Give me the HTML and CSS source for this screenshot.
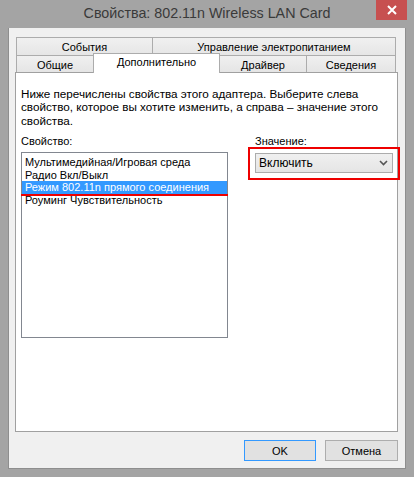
FILE: index.html
```html
<!DOCTYPE html>
<html lang="ru">
<head>
<meta charset="utf-8">
<title>Свойства: 802.11n Wireless LAN Card</title>
<link rel="stylesheet" href="styles.css">
</head>
<body>
<div class="window">
  <div class="titlebar">
    <span class="title">Свойства: 802.11n Wireless LAN Card</span>
    <div class="close" aria-label="Закрыть">
      <svg width="10" height="10" viewBox="0 0 10 10"><path d="M1 1 L9 9 M9 1 L1 9" stroke="#fff" stroke-width="2" fill="none"/></svg>
    </div>
  </div>
  <div class="client">
    <div class="tabs">
      <div class="tabrow">
        <div class="tab w-events">События</div>
        <div class="tab w-power">Управление электропитанием</div>
      </div>
      <div class="tabrow">
        <div class="tab w-general">Общие</div>
        <div class="tab w-adv selected">Дополнительно</div>
        <div class="tab w-driver">Драйвер</div>
        <div class="tab w-info">Сведения</div>
      </div>
    </div>
    <div class="panel">
      <p class="desc">Ниже перечислены свойства этого адаптера. Выберите слева<br>свойство, которое вы хотите изменить, а справа – значение этого<br>свойства.</p>
      <div class="cols">
        <div class="col-left">
          <div class="label">Свойство:</div>
          <div class="listbox">
            <div class="item">Мультимедийная/Игровая среда</div>
            <div class="item">Радио Вкл/Выкл</div>
            <div class="item selected">Режим 802.11n прямого соединения</div>
            <div class="item">Роуминг Чувствительность</div>
          </div>
        </div>
        <div class="col-right">
          <div class="label">Значение:</div>
          <div class="select-wrap">
            <div class="select">
              <span>Включить</span>
              <svg width="9" height="6" viewBox="0 0 9 6"><path d="M1 1 L4.5 4.5 L8 1" stroke="#555" stroke-width="1.6" fill="none"/></svg>
            </div>
            <div class="mark"></div>
          </div>
        </div>
      </div>
    </div>
    <div class="buttons">
      <div class="btn default w-ok">OK</div>
      <div class="btn w-cancel">Отмена</div>
    </div>
  </div>
</div>
</body>
</html>
```
FILE: styles.css
```css
* { box-sizing: border-box; }
html, body { margin: 0; padding: 0; }
body {
  background: #a4a4a4;
  font-family: "Segoe UI", "Liberation Sans", Arial, sans-serif;
  font-size: 11px;
  color: #000;
}
.window {
  width: 414px;
  height: 477px;
  background: #a4a4a4;
}
.titlebar {
  height: 28px;
  position: relative;
  display: flex;
  align-items: center;
  justify-content: center;
  padding-bottom: 2px;
}
.title {
  font-size: 14.3px;
  color: #3a3a3a;
}
.close {
  position: absolute;
  top: 0;
  right: 7px;
  width: 31px;
  height: 20px;
  background: #c75050;
  display: flex;
  align-items: center;
  justify-content: center;
}
.client {
  margin: 0 8px;
  height: 441px;
  background: #f0f0f0;
  border-left: 1px solid #8e8e8e;
  border-right: 1px solid #8e8e8e;
  border-bottom: 1px solid #8e8e8e;
  padding: 9px 7px 0 6px;
}
.tabs {
  margin-left: 1px;
}
.tabrow {
  display: flex;
}
.tab {
  margin-left: -1px;
  border: 1px solid #acacac;
  border-bottom: none;
  background: linear-gradient(#f0f0f0, #e5e5e5);
  display: flex;
  align-items: center;
  justify-content: center;
  color: #000;
  white-space: nowrap;
}
.tab:first-child { margin-left: 0; }
.tabrow:first-child .tab { height: 19px; padding-bottom: 1px; }
.tabrow:last-child .tab { height: 17px; margin-top: -1px; padding-top: 1px; }
.tabrow:last-child .tab.selected {
  position: relative;
  z-index: 1;
  height: 20px;
  margin-top: -3px;
  margin-bottom: -1px;
  background: #fff;
  padding-top: 0;
  padding-bottom: 4px;
}
.w-events { width: 137px; }
.w-power { width: 244px; }
.w-general { width: 78px; }
.w-adv { width: 127px; }
.w-driver { width: 88px; }
.w-info { width: 90px; }
.panel {
  width: 383px;
  height: 360px;
  background: #fff;
  border: 1px solid #a0a0a0;
  padding: 14px 5px 0 5px;
}
.desc {
  margin: 0;
  font-size: 11.7px;
  line-height: 13.4px;
  white-space: nowrap;
}
.cols {
  display: flex;
  gap: 27px;
  margin-top: 8px;
}
.col-left { width: 207px; }
.col-right { width: 138px; }
.label {
  line-height: 13px;
  margin-bottom: 4px;
}
.col-right .label { margin-bottom: 5px; }
.listbox {
  width: 207px;
  height: 186px;
  border: 1px solid #828790;
  background: #fff;
  padding-top: 3px;
}
.item {
  position: relative;
  height: 12.5px;
  line-height: 12.5px;
  padding-left: 3px;
  white-space: nowrap;
}
.item.selected {
  background: #3399ff;
  color: #fff;
}
.item.selected::after {
  content: "";
  position: absolute;
  left: -1px;
  right: -1px;
  top: 100%;
  height: 2px;
  background: #ee0000;
}
.select-wrap {
  position: relative;
  width: 138px;
}
.select {
  height: 20px;
  border: 1px solid #acacac;
  background: linear-gradient(#f0f0f0, #e5e5e5);
  display: flex;
  align-items: center;
  justify-content: space-between;
  padding: 0 4px 0 3px;
  font-size: 12px;
}
.mark {
  position: absolute;
  top: -6px;
  left: -7px;
  right: -7px;
  bottom: -7px;
  border: 2px solid #ee0000;
}
.buttons {
  display: flex;
  justify-content: flex-end;
  gap: 9px;
  margin-top: 8px;
}
.btn {
  height: 21px;
  border: 1px solid #adadad;
  background: #e1e1e1;
  display: flex;
  align-items: center;
  justify-content: center;
}
.btn.default { border-color: #3399ff; }
.w-ok { width: 72px; }
.w-cancel { width: 73px; }
```
